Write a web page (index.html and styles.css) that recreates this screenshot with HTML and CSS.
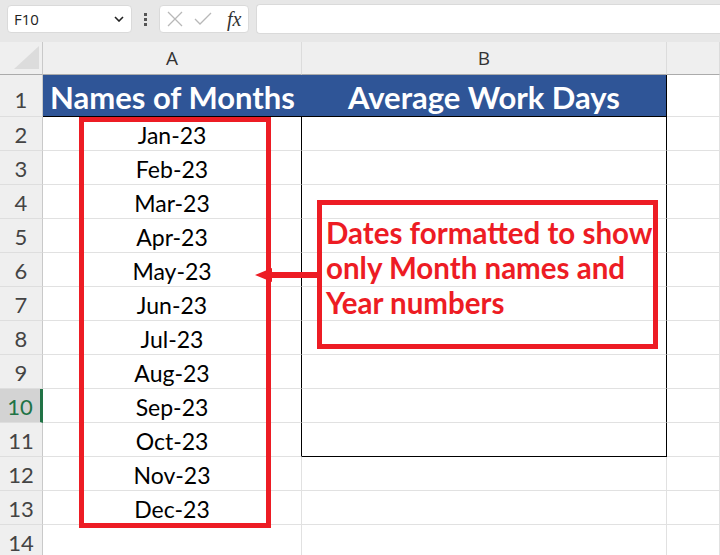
FILE: index.html
```html
<!DOCTYPE html>
<html lang="en">
<head>
    <meta charset="UTF-8">
    <title>Month Names</title>
    <link rel="stylesheet" href="styles.css">
</head>
<body>

    <div class="toolbar">
        <div class="name-box">
            <span>F10</span>
            <svg class="chevron" width="10" height="6" viewBox="0 0 10 6"><path d="M1 1 L5 5 L9 1" fill="none" stroke="#222" stroke-width="1.6"/></svg>
        </div>
        <div class="dots"><i></i><i></i><i></i></div>
        <div class="fx-box">
            <svg width="16" height="16" viewBox="0 0 16 16"><path d="M1 1 L15 15 M15 1 L1 15" stroke="#b8b8b8" stroke-width="1.3"/></svg>
            <svg width="18" height="14" viewBox="0 0 18 14"><path d="M1 7 L6 12 L17 1" fill="none" stroke="#b8b8b8" stroke-width="1.3"/></svg>
            <span class="fx">fx</span>
        </div>
        <div class="formula"></div>
    </div>

    <div class="sheet">
        <div class="corner"><span class="tri"></span></div>
        <div class="ch">A</div>
        <div class="ch">B</div>
        <div class="ch"></div>

        <div class="rh r1">1</div>
        <div class="c head">Names of Months</div>
        <div class="c head hb">Average Work Days</div>
        <div class="c r1"></div>

        <div class="rh">2</div><div class="c bl">Jan-23</div><div class="c bx"></div><div class="c"></div>
        <div class="rh">3</div><div class="c bl">Feb-23</div><div class="c bx"></div><div class="c"></div>
        <div class="rh">4</div><div class="c bl">Mar-23</div><div class="c bx"></div><div class="c"></div>
        <div class="rh">5</div><div class="c bl">Apr-23</div><div class="c bx"></div><div class="c"></div>
        <div class="rh">6</div><div class="c bl">May-23</div><div class="c bx"></div><div class="c"></div>
        <div class="rh">7</div><div class="c bl">Jun-23</div><div class="c bx"></div><div class="c"></div>
        <div class="rh">8</div><div class="c bl">Jul-23</div><div class="c bx"></div><div class="c"></div>
        <div class="rh">9</div><div class="c bl">Aug-23</div><div class="c bx"></div><div class="c"></div>
        <div class="rh sel">10</div><div class="c bl">Sep-23</div><div class="c bx"></div><div class="c"></div>
        <div class="rh">11</div><div class="c bl">Oct-23</div><div class="c bx last"></div><div class="c"></div>
        <div class="rh">12</div><div class="c">Nov-23</div><div class="c"></div><div class="c"></div>
        <div class="rh">13</div><div class="c">Dec-23</div><div class="c"></div><div class="c"></div>
        <div class="rh">14</div><div class="c"></div><div class="c"></div><div class="c"></div>
    </div>

    <div class="mark-box"></div>

    <div class="note">
        Dates formatted to show only Month names and Year numbers
    </div>

    <svg class="arrow" width="64" height="16" viewBox="0 0 64 16">
        <path d="M0 7 L17 0 L17 4 L63 4 L63 10 L17 10 L17 14 Z" fill="#ed1c24"/>
    </svg>

</body>
</html>
```

FILE: styles.css
```css
body {
    margin: 0;
    width: 720px;
    height: 555px;
    overflow: hidden;
    position: relative;
    background-color: #fff;
    font-family: 'Lato', sans-serif;
}
.toolbar {
    height: 42px;
    background-color: #e7e7e7;
    display: flex;
    align-items: center;
    padding: 0 0 4px 7px;
    box-sizing: border-box;
}
.name-box {
    width: 125px;
    height: 28px;
    background-color: #fff;
    border: 1px solid #dadada;
    border-radius: 4px;
    box-sizing: border-box;
    display: flex;
    align-items: center;
    justify-content: space-between;
    padding: 0 7px 0 6px;
    font-family: 'Open Sans', sans-serif;
    font-size: 15px;
    color: #222;
}
.dots {
    width: 27px;
    display: flex;
    flex-direction: column;
    align-items: center;
    gap: 2px;
}
.dots i {
    width: 3px;
    height: 3px;
    background-color: #555;
}
.fx-box {
    width: 90px;
    height: 28px;
    background-color: #fff;
    border: 1px solid #dadada;
    border-radius: 4px;
    box-sizing: border-box;
    display: flex;
    align-items: center;
    padding: 0 6px 0 7px;
    gap: 11px;
}
.fx {
    font-family: 'Liberation Serif', serif;
    font-style: italic;
    font-size: 20px;
    color: #333;
    margin-left: 4px;
}
.formula {
    flex: 1;
    height: 28px;
    margin-left: 7px;
    background-color: #fff;
    border: 1px solid #dadada;
    border-right: none;
    border-radius: 4px 0 0 4px;
}
.sheet {
    display: grid;
    grid-template-columns: 43px 259px 365px 1fr;
    grid-template-rows: 33px 42px repeat(13, 34px);
}
.sheet > div {
    box-sizing: border-box;
}
.corner {
    background-color: #efefef;
    border-right: 1px solid #c9c9c9;
    border-bottom: 1px solid #ababab;
    position: relative;
}
.tri {
    position: absolute;
    right: 3px;
    bottom: 5px;
    width: 0;
    height: 0;
    border-left: 25px solid transparent;
    border-bottom: 23px solid #dcdcdc;
}
.ch {
    background-color: #efefef;
    border-right: 1px solid #dcdcdc;
    border-bottom: 1px solid #ababab;
    display: flex;
    align-items: center;
    justify-content: center;
    font-family: 'Open Sans', sans-serif;
    font-size: 19px;
    color: #333;
}
.rh {
    background-color: #efefef;
    border-right: 1px solid #c9c9c9;
    border-bottom: 1px solid #dedede;
    display: flex;
    align-items: center;
    justify-content: center;
    padding-top: 2px;
    font-size: 22px;
    color: #444;
}
.rh.r1 {
    padding-top: 8px;
}
.rh.sel {
    background-color: #d3d3d3;
    color: #217346;
    border-right: 3px solid #217346;
}
.c {
    border-right: 1px solid #e1e1e1;
    border-bottom: 1px solid #e1e1e1;
    display: flex;
    align-items: center;
    justify-content: center;
    padding-top: 3px;
    font-size: 23px;
    color: #000;
}
.c.head {
    background-color: #2f5597;
    color: #fff;
    font-weight: bold;
    font-size: 31px;
    border-right: none;
    border-bottom: 1px solid #000;
    padding-top: 2px;
}
.c.head.hb {
    border-right: 1px solid #000;
}
.c.bl {
    border-right: 1px solid #000;
}
.c.bx {
    border-right: 1px solid #000;
}
.c.bx.last {
    border-bottom: 1px solid #000;
}
.mark-box {
    position: absolute;
    left: 79px;
    top: 117px;
    width: 192px;
    height: 411px;
    border: 5px solid #ed1c24;
    box-sizing: border-box;
}
.note {
    position: absolute;
    left: 317px;
    top: 200px;
    width: 341px;
    height: 149px;
    border: 5px solid #ed1c24;
    box-sizing: border-box;
    padding: 10px 0 0 4px;
    color: #ed1c24;
    font-weight: bold;
    font-size: 29.5px;
    line-height: 35px;
}
.arrow {
    position: absolute;
    left: 255px;
    top: 268px;
}
```
